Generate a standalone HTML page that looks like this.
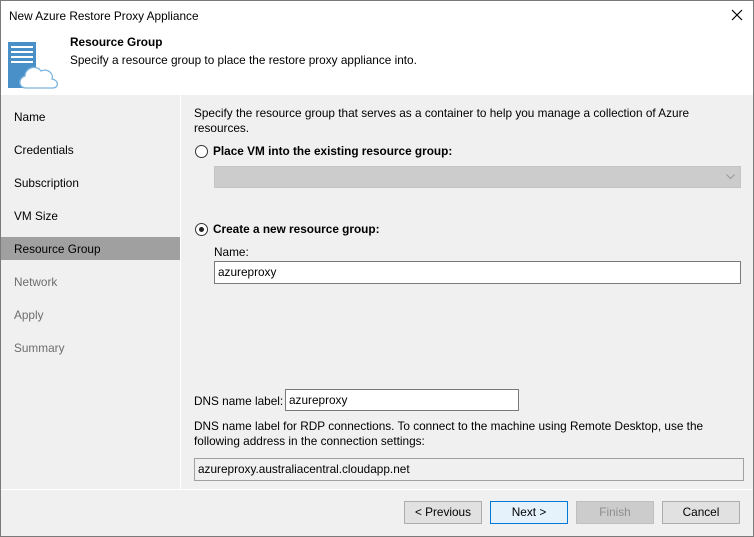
<!DOCTYPE html>
<html><head><style>
*{margin:0;padding:0;box-sizing:border-box}
body{width:754px;height:537px;position:relative;background:#f0f0f0;font-family:"Liberation Sans",sans-serif;font-size:11.8px;color:#000;overflow:hidden}
.a{position:absolute;white-space:nowrap}
.frame{position:absolute;left:0;top:0;width:754px;height:537px;border:1px solid #7a7a7a;pointer-events:none}
.nav{left:14px}
.btn{position:absolute;top:501px;height:23px;border:1px solid #adadad;background:#e1e1e1;text-align:center;line-height:21px}
.radio{position:absolute;width:13px;height:13px;border:1px solid #333;border-radius:50%;background:#fff}
.inp{position:absolute;background:#fff;border:1px solid #7a7a7a;padding-left:3px;line-height:20px}
</style></head><body>
<div class="a" style="left:0;top:0;width:754px;height:95px;background:#fff"></div>
<div class="a" style="left:9px;top:9px">New Azure Restore Proxy Appliance</div>
<svg class="a" style="left:731px;top:9px" width="12" height="12"><path d="M1 1L11 11M11 1L1 11" stroke="#000" stroke-width="1.2"/></svg>
<svg class="a" style="left:8px;top:42px" width="52" height="48">
<rect x="0" y="0" width="28" height="46" fill="#4a90c8"/>
<rect x="3" y="4" width="22" height="2" fill="#fff"/><rect x="3" y="9" width="22" height="2" fill="#fff"/><rect x="3" y="14" width="22" height="2" fill="#fff"/><rect x="3" y="19" width="22" height="2" fill="#fff"/>
<path d="M18 46 C10 46 10 36 17 34 C17 26 28 22 33 29 C40 26 46 32 44 37 C51 38 51 46 45 46 Z" fill="#fff" stroke="#7ab4de" stroke-width="1.3"/>
</svg>
<div class="a" style="left:70px;top:35px;font-weight:bold">Resource Group</div>
<div class="a" style="left:70px;top:53px">Specify a resource group to place the restore proxy appliance into.</div>
<div class="a" style="left:180px;top:95px;width:1px;height:394px;background:#fff"></div>
<div class="a nav" style="top:110px">Name</div>
<div class="a nav" style="top:143px">Credentials</div>
<div class="a nav" style="top:176px">Subscription</div>
<div class="a nav" style="top:209px">VM Size</div>
<div class="a" style="left:1px;top:237px;width:179px;height:23px;background:#a0a0a0"></div>
<div class="a nav" style="top:242px">Resource Group</div>
<div class="a nav" style="top:275px;color:#6d6d6d">Network</div>
<div class="a nav" style="top:308px;color:#6d6d6d">Apply</div>
<div class="a nav" style="top:341px;color:#6d6d6d">Summary</div>
<div class="a" style="left:194px;top:106px">Specify the resource group that serves as a container to help you manage a collection of Azure</div>
<div class="a" style="left:194px;top:121px">resources.</div>
<div class="radio" style="left:195px;top:145px"></div>
<div class="a" style="left:213px;top:144px;font-weight:bold">Place VM into the existing resource group:</div>
<div class="a" style="left:214px;top:166px;width:527px;height:22px;background:#cccccc;border:1px solid #c4c4c4"></div>
<svg class="a" style="left:726px;top:174px" width="9" height="6"><path d="M0.5 0.5L4.5 4.5L8.5 0.5" stroke="#999" fill="none"/></svg>
<div class="radio" style="left:195px;top:223px"></div>
<div class="a" style="left:199px;top:227px;width:5px;height:5px;border-radius:50%;background:#222"></div>
<div class="a" style="left:213px;top:222px;font-weight:bold">Create a new resource group:</div>
<div class="a" style="left:214px;top:245px">Name:</div>
<div class="inp" style="left:214px;top:261px;width:527px;height:23px">azureproxy</div>
<div class="a" style="left:194px;top:394px">DNS name label:</div>
<div class="inp" style="left:285px;top:389px;width:234px;height:22px">azureproxy</div>
<div class="a" style="left:194px;top:419px">DNS name label for RDP connections. To connect to the machine using Remote Desktop, use the</div>
<div class="a" style="left:194px;top:434px">following address in the connection settings:</div>
<div class="inp" style="left:194px;top:458px;width:550px;height:23px;background:#f0f0f0;border-color:#a0a0a0">azureproxy.australiacentral.cloudapp.net</div>
<div class="a" style="left:0;top:489px;width:754px;height:1px;background:#fff"></div>
<div class="btn" style="left:404px;width:78px">&lt; Previous</div>
<div class="btn" style="left:490px;width:78px;border-color:#0078d7;background:#e5f1fb">Next &gt;</div>
<div class="btn" style="left:576px;width:78px;background:#cccccc;border-color:#bfbfbf;color:#8d8d8d">Finish</div>
<div class="btn" style="left:662px;width:78px">Cancel</div>
<div class="frame"></div>
</body></html>
